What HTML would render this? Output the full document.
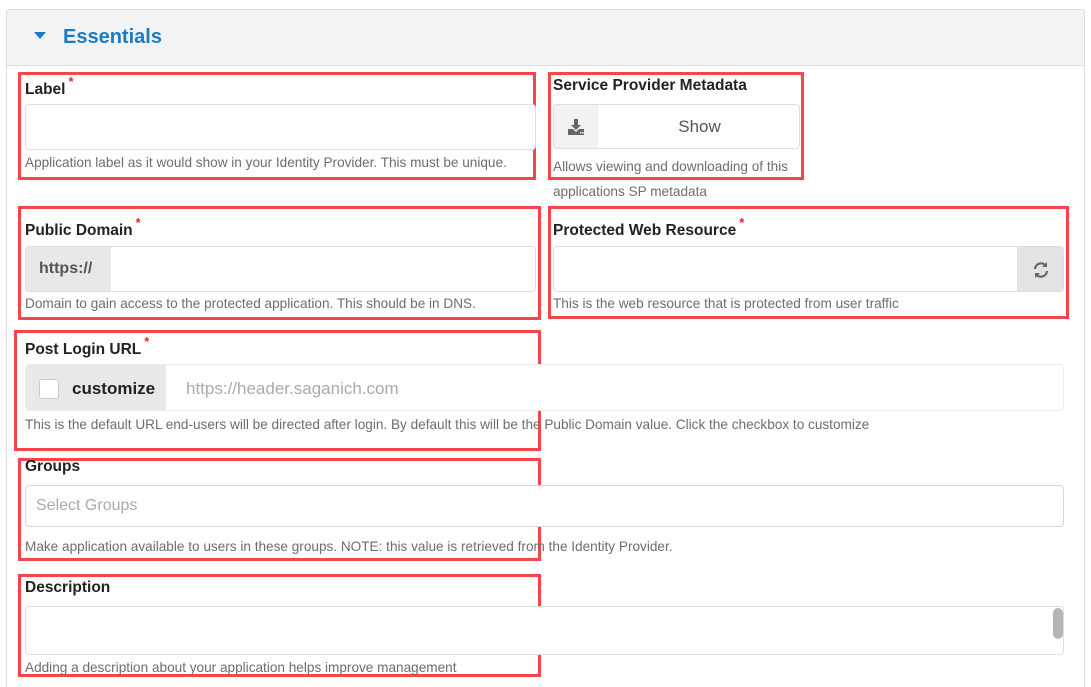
<!DOCTYPE html>
<html><head><meta charset="utf-8"><style>
*{box-sizing:border-box;margin:0;padding:0}
html,body{width:1091px;height:687px;overflow:hidden}
body{background:#fff;font-family:"Liberation Sans",sans-serif;position:relative}
.a{position:absolute}
.panel{left:6px;top:9px;width:1079px;height:700px;border:1px solid #dcdcdc;border-radius:3px}
.hdr{left:7px;top:10px;width:1077px;height:56px;background:#f2f3f5;border-bottom:1px solid #dcdcdc}
.red{border:3px solid #f5474b}
.lbl{font-size:15.5px;font-weight:bold;color:#222;white-space:nowrap}
.lbl sup{color:#e8262b;font-size:13px;margin-left:3px;position:relative;top:-2px}
.help{font-size:13.6px;color:#6d6d6d;white-space:nowrap}
.inp{border:1px solid #dedede;border-radius:4px;background:#fff;overflow:hidden}
</style></head><body>
<div class="a panel"></div>
<div class="a hdr"></div>
<div class="a" style="left:34px;top:32px;width:0;height:0;border-left:6px solid transparent;border-right:6px solid transparent;border-top:7px solid #1a7bc7"></div>
<div class="a" style="left:63px;top:26px;font-size:20px;font-weight:bold;color:#1a7bc7">Essentials</div>

<div class="a red" style="left:18px;top:72px;width:518px;height:108px"></div>
<div class="a lbl" style="left:25px;top:76px">Label<sup>*</sup></div>
<div class="a inp" style="left:25px;top:104px;width:511px;height:46px"></div>
<div class="a help" style="left:25px;top:155px">Application label as it would show in your Identity Provider. This must be unique.</div>

<div class="a red" style="left:548px;top:72px;width:256px;height:108px"></div>
<div class="a lbl" style="left:553px;top:77px">Service Provider Metadata</div>
<div class="a inp" style="left:553px;top:104px;width:247px;height:45px">
 <div class="a" style="left:0;top:0;width:44px;height:45px;background:#f2f2f2"></div>
 <svg class="a" style="left:13px;top:13px" width="18" height="18" viewBox="0 0 18 18"><path d="M7 1h4v6h3l-5 5-5-5h3z" fill="#666"/><path d="M1 11h5l3 3 3-3h5v6H1z" fill="#666"/><rect x="13" y="14" width="1.5" height="1.5" fill="#f2f2f2"/><rect x="15" y="14" width="1.5" height="1.5" fill="#f2f2f2"/></svg>
 <div class="a" style="left:44px;top:12px;width:203px;text-align:center;font-size:17px;color:#555">Show</div>
</div>
<div class="a help" style="left:553px;top:154px;line-height:25px">Allows viewing and downloading of this<br>applications SP metadata</div>

<div class="a red" style="left:18px;top:206px;width:523px;height:114px"></div>
<div class="a lbl" style="left:25px;top:217px">Public Domain<sup>*</sup></div>
<div class="a inp" style="left:25px;top:246px;width:511px;height:46px">
 <div class="a" style="left:0;top:0;width:85px;height:46px;background:#e8e8e8;font-size:16px;font-weight:bold;color:#555;padding:13px 0 0 13px">https://</div>
</div>
<div class="a help" style="left:25px;top:296px">Domain to gain access to the protected application. This should be in DNS.</div>

<div class="a red" style="left:548px;top:206px;width:521px;height:113px"></div>
<div class="a lbl" style="left:553px;top:217px">Protected Web Resource<sup>*</sup></div>
<div class="a inp" style="left:553px;top:246px;width:511px;height:46px">
 <div class="a" style="left:463px;top:0;width:48px;height:46px;background:#e3e3e3"></div>
 <svg class="a" style="left:478px;top:14px" width="18" height="18" viewBox="0 0 18 18" fill="none" stroke="#666" stroke-width="2.2"><path d="M3 8a6 6 0 0 1 11-3"/><path d="M15 10a6 6 0 0 1-11 3"/><path d="M15 1v5h-5" fill="#666" stroke="none"/><path d="M3 17v-5h5" fill="#666" stroke="none"/></svg>
</div>
<div class="a help" style="left:553px;top:296px">This is the web resource that is protected from user traffic</div>

<div class="a red" style="left:14px;top:330px;width:527px;height:121px"></div>
<div class="a lbl" style="left:25px;top:336px">Post Login URL<sup>*</sup></div>
<div class="a inp" style="left:25px;top:364px;width:1039px;height:47px;border-color:#ececec">
 <div class="a" style="left:0;top:0;width:140px;height:47px;background:#e8e8e8"></div>
 <div class="a" style="left:13px;top:14px;width:20px;height:20px;background:#fff;border:1px solid #ccc;border-radius:3px"></div>
 <div class="a" style="left:46px;top:14px;font-size:17px;font-weight:bold;color:#222">customize</div>
 <div class="a" style="left:160px;top:14px;font-size:17px;color:#aaa">https://header.saganich.com</div>
</div>
<div class="a help" style="left:25px;top:417px">This is the default URL end-users will be directed after login. By default this will be the Public Domain value. Click the checkbox to customize</div>

<div class="a red" style="left:18px;top:458px;width:523px;height:103px"></div>
<div class="a lbl" style="left:25px;top:458px">Groups</div>
<div class="a inp" style="left:25px;top:485px;width:1039px;height:42px;border-color:#d6d6d6">
 <div class="a" style="left:10px;top:11px;font-size:16px;color:#aaa">Select Groups</div>
</div>
<div class="a help" style="left:25px;top:539px">Make application available to users in these groups. NOTE: this value is retrieved from the Identity Provider.</div>

<div class="a red" style="left:18px;top:574px;width:523px;height:103px"></div>
<div class="a lbl" style="left:25px;top:579px">Description</div>
<div class="a inp" style="left:25px;top:606px;width:1039px;height:49px">
 <div class="a" style="left:1027px;top:1px;width:10px;height:31px;background:#b5b5b5;border-radius:5px"></div>
</div>
<div class="a help" style="left:25px;top:660px">Adding a description about your application helps improve management</div>
</body></html>
